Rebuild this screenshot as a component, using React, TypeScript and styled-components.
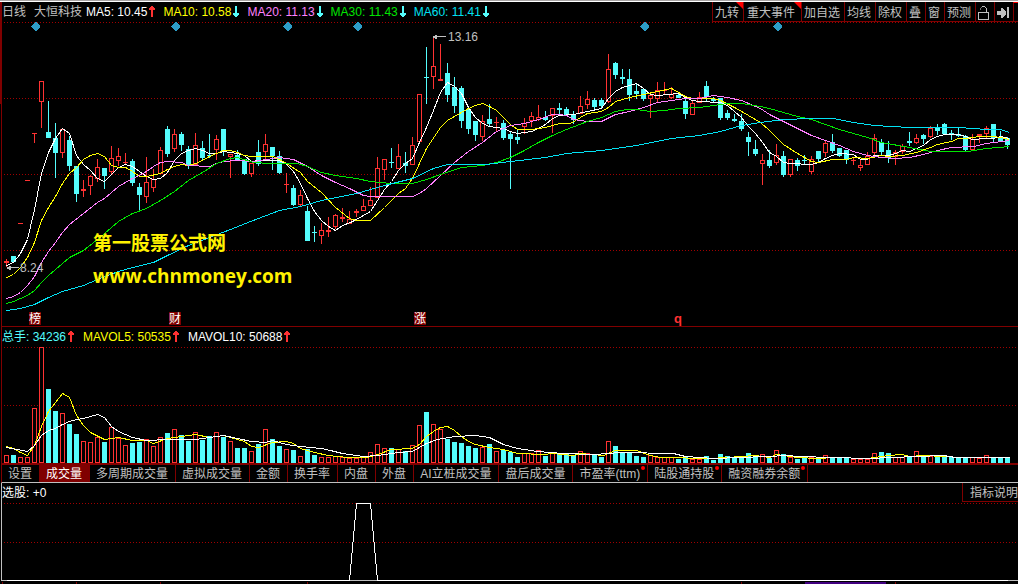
import React from "react";
import styled, { createGlobalStyle } from "styled-components";

const C = {
  up: "#ff3232",
  down: "#54fcfc",
  line: "#800000",
  grid: "#a00000",
  text: "#c0c0c0",
  ma5: "#ffffff",
  ma10: "#ffff00",
  ma20: "#ff80ff",
  ma30: "#00e600",
  ma60: "#02e2f4",
  diamond: "#2d9dc8",
};

const sans = '"Liberation Sans", "Noto Sans CJK SC", sans-serif';

const GlobalStyle = createGlobalStyle`
  * { box-sizing: border-box; }
  body { margin: 0; background: #000; color: ${C.text}; font: 12px/16px ${sans}; }
  button { font: inherit; color: inherit; background: none; border: 0; margin: 0; padding: 0; cursor: pointer; }
`;

/* ---------- data ---------- */

// direction, high, body top, body bottom, low
type Candle = ["u" | "d", number, number, number, number];

const candles: Candle[] = [
  ["u", 259, 261, 263, 267], ["d", 256, 256, 262, 262], ["u", 223, 223, 224, 224], ["u", 180, 180, 181, 181],
  ["u", 133, 133, 134, 143], ["u", 81, 81, 102, 128], ["d", 101, 132, 138, 138], ["d", 123, 138, 153, 178],
  ["u", 128, 129, 153, 158], ["d", 136, 140, 166, 171], ["d", 166, 166, 194, 202], ["u", 180, 189, 191, 197],
  ["u", 175, 176, 186, 195], ["u", 159, 167, 179, 182], ["d", 168, 168, 176, 189], ["u", 146, 158, 172, 175],
  ["u", 148, 156, 161, 166], ["u", 153, 162, 163, 164], ["d", 159, 161, 183, 186], ["d", 183, 187, 195, 212],
  ["u", 157, 182, 197, 203], ["u", 169, 179, 188, 192], ["u", 147, 150, 174, 174], ["d", 126, 129, 154, 157],
  ["u", 129, 134, 149, 152], ["d", 132, 134, 145, 151], ["d", 146, 149, 166, 169], ["u", 133, 145, 165, 165],
  ["d", 141, 148, 158, 160], ["d", 134, 155, 156, 158], ["u", 135, 139, 150, 160], ["d", 129, 129, 151, 156],
  ["u", 154, 154, 157, 178], ["d", 150, 155, 160, 161], ["d", 159, 159, 174, 175], ["u", 163, 163, 174, 177],
  ["d", 140, 152, 164, 166], ["u", 134, 144, 152, 160], ["d", 147, 147, 156, 170], ["d", 151, 156, 173, 174],
  ["u", 173, 184, 185, 193], ["d", 185, 188, 205, 206], ["u", 190, 195, 205, 207], ["d", 206, 211, 241, 241],
  ["d", 226, 232, 233, 242], ["u", 223, 230, 236, 244], ["u", 217, 230, 232, 237], ["u", 214, 215, 227, 229],
  ["u", 208, 217, 219, 222], ["u", 211, 219, 224, 224], ["u", 209, 211, 213, 217], ["u", 199, 206, 211, 211],
  ["u", 187, 200, 206, 206], ["u", 157, 168, 198, 198], ["u", 159, 159, 170, 180], ["d", 148, 162, 163, 168],
  ["u", 144, 156, 169, 169], ["d", 152, 163, 166, 173], ["u", 137, 145, 165, 165], ["u", 94, 94, 142, 143],
  ["d", 47, 77, 78, 104], ["u", 37, 66, 77, 89], ["u", 44, 79, 81, 81], ["d", 63, 73, 95, 102],
  ["d", 77, 87, 106, 113], ["d", 86, 88, 121, 128], ["d", 109, 110, 129, 134], ["d", 121, 121, 135, 141],
  ["u", 115, 121, 137, 141], ["d", 104, 119, 124, 126], ["u", 117, 122, 123, 132], ["d", 120, 123, 138, 140],
  ["d", 131, 134, 139, 189], ["d", 130, 137, 140, 144], ["u", 118, 123, 127, 134], ["u", 112, 116, 121, 127],
  ["u", 105, 117, 120, 121], ["d", 111, 117, 120, 121], ["u", 108, 108, 116, 133], ["d", 103, 108, 110, 114],
  ["d", 107, 109, 115, 116], ["d", 111, 114, 120, 124], ["u", 96, 106, 114, 114], ["u", 91, 99, 105, 109],
  ["d", 98, 100, 107, 109], ["d", 98, 100, 106, 108], ["u", 54, 69, 102, 103], ["d", 62, 63, 75, 79],
  ["d", 69, 77, 79, 84], ["d", 69, 79, 95, 101], ["d", 83, 91, 94, 99], ["d", 89, 89, 99, 101],
  ["u", 94, 95, 99, 118], ["u", 82, 90, 99, 102], ["u", 82, 90, 91, 94], ["u", 87, 94, 98, 99],
  ["d", 92, 95, 98, 98], ["d", 98, 101, 114, 119], ["u", 101, 103, 115, 115], ["u", 92, 97, 103, 103],
  ["d", 81, 86, 97, 101], ["d", 97, 99, 101, 102], ["d", 98, 98, 118, 120], ["d", 110, 113, 118, 120],
  ["d", 114, 119, 121, 122], ["d", 114, 121, 129, 131], ["d", 132, 137, 142, 156], ["d", 140, 149, 154, 156],
  ["u", 154, 160, 164, 185], ["d", 150, 160, 166, 168], ["u", 144, 155, 163, 165], ["d", 151, 156, 175, 177],
  ["u", 159, 159, 175, 177], ["d", 158, 160, 166, 171], ["d", 155, 160, 161, 165], ["u", 156, 159, 172, 174],
  ["d", 151, 151, 159, 163], ["u", 141, 143, 153, 157], ["d", 134, 142, 151, 153], ["d", 148, 148, 156, 157],
  ["d", 150, 150, 160, 164], ["u", 158, 160, 161, 165], ["u", 160, 165, 168, 171], ["u", 152, 156, 165, 165],
  ["u", 134, 138, 153, 156], ["d", 139, 142, 152, 156], ["d", 141, 150, 158, 163], ["u", 150, 152, 157, 165],
  ["u", 144, 146, 152, 154], ["d", 132, 141, 143, 146], ["u", 134, 138, 143, 144], ["d", 134, 135, 139, 144],
  ["u", 126, 128, 137, 138], ["d", 124, 128, 131, 135], ["d", 123, 124, 134, 134], ["d", 130, 133, 135, 140],
  ["d", 128, 134, 136, 137], ["d", 135, 136, 150, 151], ["u", 134, 139, 150, 150], ["u", 134, 134, 136, 143],
  ["u", 126, 128, 134, 139], ["d", 124, 124, 138, 142], ["d", 131, 137, 141, 142], ["d", 137, 138, 145, 149],
];

const volumeTops = [
  455, 455, 457, 457, 408, 347, 389, 411, 413, 424, 434, 441, 442, 437, 442, 427, 438, 445, 443, 442, 439, 446, 437,
  433, 429, 435, 441, 432, 440, 436, 432, 437, 441, 448, 448, 451, 444, 429, 439, 446, 449, 450, 456, 449, 455, 457,
  457, 456, 457, 458, 458, 457, 452, 444, 448, 448, 449, 451, 445, 425, 412, 424, 429, 439, 442, 443, 446, 448, 447,
  444, 451, 450, 452, 457, 453, 453, 450, 456, 453, 454, 454, 455, 451, 453, 455, 457, 441, 446, 452, 452, 456, 457,
  455, 457, 457, 457, 459, 456, 459, 459, 456, 460, 454, 456, 458, 457, 453, 456, 454, 458, 450, 454, 457, 459, 458,
  457, 459, 455, 457, 457, 458, 459, 459, 459, 453, 452, 453, 457, 457, 457, 451, 457, 456, 457, 457, 457, 457, 458,
  457, 458, 455, 458, 458, 458,
];

const ma5 =
  "6,265 13,262 20,253 27,239 34,209 41,173 48,152 55,138 62,128 69,133 76,155 83,164 90,170 97,178 104,181 111,174 118,167 125,164 132,166 139,171 146,176 153,179 160,178 167,172 174,160 181,153 188,150 195,148 202,150 209,153 216,153 223,151 230,152 237,153 244,155 251,161 258,160 272,160 279,160 286,164 293,171 300,183 307,198 314,211 321,220 328,226 335,230 342,225 350,222 356,219 370,211 377,200 384,189 391,181 398,170 405,163 412,158 419,142 426,127 433,110 440,92 447,82 454,86 461,93 468,107 475,117 482,123 489,126 496,127 503,128 510,131 517,133 531,131 538,128 545,124 552,118 559,115 573,114 587,111 601,108 608,98 615,91 622,87 636,83 643,88 650,94 657,95 678,93 685,97 692,100 699,101 720,102 727,105 734,111 741,117 748,126 755,133 762,142 769,152 776,156 783,162 790,163 811,164 818,162 825,158 832,155 839,153 853,154 860,159 867,159 874,155 888,155 895,153 902,150 909,151 916,148 923,145 930,139 937,136 944,134 958,134 965,136 972,139 986,138 993,138 1000,136 1009,138";
const ma10 =
  "6,277 13,274 20,267 27,257 34,242 41,220 48,207 55,196 62,183 69,173 76,167 83,159 90,155 97,153 104,156 111,165 118,167 125,167 132,171 139,176 146,176 160,173 167,169 174,166 181,164 188,165 195,163 202,160 209,156 216,153 223,150 230,150 237,152 244,155 251,156 272,156 279,159 286,163 300,172 307,181 321,192 335,207 349,218 356,220 370,220 384,207 398,193 405,188 412,178 419,163 426,148 440,127 447,120 454,116 461,112 468,108 475,105 482,103 489,106 496,110 503,117 510,124 517,129 531,129 545,127 559,123 570,123 580,117 587,113 601,111 608,107 615,101 629,97 643,94 657,91 671,88 678,92 685,96 692,98 713,98 720,100 734,107 748,115 760,122 769,130 783,144 797,153 811,161 818,162 832,159 846,159 853,157 867,158 881,155 888,156 902,155 916,152 930,147 937,144 951,141 958,138 965,138 979,136 993,136 1000,137 1009,139";
const ma20 =
  "6,298 13,296 20,292 27,285 34,276 41,262 48,251 55,242 62,232 69,224 83,213 97,202 104,198 111,192 118,186 125,182 132,178 139,175 146,171 153,166 160,162 167,161 181,162 188,165 209,166 216,163 223,161 237,160 253,161 279,157 293,159 307,166 321,175 335,182 349,188 363,195 370,196 412,196 419,193 426,188 440,175 454,162 468,151 482,142 496,131 510,125 524,123 538,119 552,114 559,114 566,115 573,119 587,121 601,121 615,114 629,111 643,107 657,102 671,100 685,98 699,98 713,95 727,97 741,100 760,108 769,114 783,121 797,128 811,135 825,140 839,145 853,151 867,155 881,157 895,158 909,157 923,154 937,150 951,147 973,146 986,143 1009,140";
const ma30 =
  "6,303 13,301 20,298 27,295 34,290 41,282 48,275 55,269 62,263 69,257 83,250 97,239 104,233 111,227 118,221 132,213 146,208 160,200 174,191 188,180 202,172 216,163 230,158 237,157 253,162 270,163 297,163 307,166 321,172 335,175 356,178 370,181 391,183 412,183 426,179 440,174 461,167 482,165 496,162 510,157 524,150 538,142 552,135 566,129 587,121 601,117 615,111 627,109 636,109 650,111 664,110 678,108 699,107 727,103 741,103 760,106 769,108 797,116 811,119 839,129 867,137 881,142 909,147 930,151 967,151 986,148 1009,146";
const ma60 =
  "6,310 20,308 34,304 48,297 62,291 83,285 97,279 118,271 132,267 153,262 167,255 188,245 209,237 230,229 250,221 279,210 300,206 321,200 356,193 384,185 412,178 433,168 447,164 485,164 510,161 545,157 566,153 601,150 636,145 671,138 699,135 720,131 741,125 760,122 783,119 811,118 833,118 853,122 874,125 909,127 958,127 986,129 1000,129 1009,132";
const mavol5 =
  "6,446 13,448 20,452 27,455 34,445 41,426 48,411 62,393 69,397 76,415 83,425 90,432 104,439 118,437 132,440 146,440 153,443 167,438 181,436 195,434 209,437 223,435 244,441 251,446 258,447 272,442 286,441 293,443 300,448 314,452 328,455 347,457 367,457 377,454 391,449 412,448 419,444 426,436 433,431 440,427 447,426 454,430 461,436 468,441 475,444 489,447 503,449 517,453 543,454 552,453 573,455 580,453 603,455 615,450 636,450 650,455 660,457 710,458 741,456 755,455 769,457 776,454 797,457 818,458 833,457 867,458 888,455 902,454 909,456 923,455 943,456 960,457 1009,457";
const mavol10 =
  "6,447 27,451 34,445 41,435 48,430 55,428 62,424 69,421 76,419 83,418 90,416 97,414 104,417 111,426 118,431 132,437 146,440 167,439 195,439 209,437 223,435 237,438 251,441 265,442 272,440 286,444 300,446 321,448 330,450 342,453 363,456 377,455 398,452 412,451 426,443 437,439 454,436 475,435 489,437 503,444 517,448 537,451 563,453 594,454 620,452 673,453 685,456 713,458 741,457 788,455 797,456 833,457 867,458 916,456 943,455 955,457 1009,457";

const diamonds = [35, 175, 287, 357, 644, 777];
const eventTags = [
  { x: 29, label: "榜" },
  { x: 169, label: "财" },
  { x: 414, label: "涨" },
];

const indicatorTabs: { label: string; dot?: boolean; active?: boolean }[] = [
  { label: "设置" },
  { label: "成交量", active: true },
  { label: "多周期成交量" },
  { label: "虚拟成交量" },
  { label: "金额" },
  { label: "换手率" },
  { label: "内盘" },
  { label: "外盘" },
  { label: "AI立桩成交量" },
  { label: "盘后成交量" },
  { label: "市盈率(ttm)", dot: true },
  { label: "陆股通持股", dot: true },
  { label: "融资融券余额", dot: true },
];

/* ---------- styled parts ---------- */

const Window = styled.main`
  width: 100%;
  overflow: hidden;
  border-top: 1px solid #a8a4a4;
`;

const TopEdge = styled.div`
  height: 1px;
  background: #ffffff;
`;

const Panel = styled.section`
  position: relative;
`;

const Header = styled.header<{ $edge: string; $thick?: boolean; $gap?: number }>`
  display: flex;
  align-items: stretch;
  height: 20px;
  gap: ${(p) => p.$gap ?? 7}px;
  line-height: 20px;
  white-space: nowrap;
  margin-left: ${(p) => (p.$thick ? 0 : 1)}px;
  border-left: ${(p) => (p.$thick ? 2 : 1)}px solid ${(p) => p.$edge};
`;

const Title = styled.h1`
  display: flex;
  gap: 8px;
  margin: 0 -3px 0 0;
  font-size: 12px;
  font-weight: 400;
`;

const Reading = styled.span<{ $color: string }>`
  display: flex;
  align-items: center;
  gap: 2px;
  color: ${(p) => p.$color};
`;

const Toolbar = styled.nav`
  display: flex;
  margin-left: auto;
  border-bottom: 1px solid ${C.line};
`;

const ToolButton = styled.button<{ $roomy?: boolean }>`
  position: relative;
  display: flex;
  align-items: center;
  justify-content: center;
  padding: ${(p) => (p.$roomy ? "2px 6px 0 3px" : "2px 4px 0 2px")};
  border-left: 1px solid ${C.line};
  line-height: 16px;
`;

const MoreButton = styled.button`
  width: 5px;
  border-left: 1px solid ${C.line};
  border-top: 1px solid #ff0000;
`;

const Flag = styled.i`
  position: absolute;
  top: 0;
  right: 0;
  border-top: 7px solid #ff0000;
  border-left: 7px solid transparent;
`;

const Chart = styled.svg<{ $h: number }>`
  display: block;
  width: 100%;
  height: ${(p) => p.$h}px;
  font-family: ${sans};
  font-size: 12px;
`;

const Watermark = styled.div`
  position: absolute;
  left: 93px;
  top: 225px;
  color: #fff200;
  font: 700 19px/33px "Open Sans", "Noto Sans CJK SC", sans-serif;
`;

const Tabs = styled.nav`
  display: flex;
  height: 20px;
  margin-left: 1px;
  border-left: 1px solid ${C.line};
  border-top: 2px solid ${C.line};
  border-bottom: 1px solid ${C.text};
  white-space: nowrap;
`;

const Tab = styled.button<{ $active?: boolean }>`
  position: relative;
  padding: 2px 7px 0 6px;
  border-right: 1px solid ${C.line};
  line-height: 15px;
  color: ${(p) => (p.$active ? "#ffffff" : C.text)};
  background: ${(p) => (p.$active ? C.line : "transparent")};
`;

const Dot = styled.i`
  position: absolute;
  top: 1px;
  right: 2px;
  width: 4px;
  height: 4px;
  border-radius: 2px;
  background: #ff0000;
`;

const NoteButton = styled.button`
  margin-left: auto;
  height: 19px;
  padding: 2px 0 0 7px;
  border-left: 1px solid ${C.line};
  border-bottom: 1px solid ${C.line};
  line-height: 16px;
`;

/* ---------- drawings ---------- */

const Arrow = ({ dir }: { dir: "up" | "down" }) => (
  <svg width="7" height="12" viewBox="0 0 7 12" shapeRendering="crispEdges" aria-hidden="true">
    {dir === "up" ? (
      <path d="M2 0h2v1h1v1h1v2h-2v7h-2v-7h-2v-2h1v-1h1z" fill={C.up} />
    ) : (
      <path d="M2 11h2v-1h1v-1h1v-2h-2v-7h-2v7h-2v2h1v1h1z" fill={C.down} />
    )}
  </svg>
);

const LockIcon = () => (
  <svg width="12" height="14" viewBox="0 0 12 14" shapeRendering="crispEdges" aria-hidden="true">
    <path d="M.5 6.5h10v7h-10z" fill="none" stroke={C.text} />
    <path d="M2 2h1v2h-1z M3 1h1v1h-1z" fill="#707070" />
    <path d="M4 0h3v1h-3z M7 1h1v1h-1z M8 2h1v4h-1z" fill={C.text} />
  </svg>
);

const JumpIcon = () => (
  <svg width="12" height="12" viewBox="0 0 12 12" shapeRendering="crispEdges" aria-hidden="true">
    <path d="M0 4h4V1h1l4 4v2l-4 4H4V8H0z M10 0h2v11h-2z" fill={C.text} />
  </svg>
);

const GridLine = ({ y }: { y: number }) => (
  <line x1="4" x2="100%" y1={y + 0.5} y2={y + 0.5} stroke={C.grid} strokeDasharray="1 2" />
);

const Curve = ({ points, color }: { points: string; color: string }) => (
  <polyline points={points} transform="translate(.5 .5)" fill="none" stroke={color} />
);

const Bar = ({ x, top, bottom, up }: { x: number; top: number; bottom: number; up: boolean }) =>
  up && bottom - top > 2 ? (
    <rect x={x + 0.5} y={top + 0.5} width="4" height={bottom - top - 1} fill="#000" stroke={C.up} />
  ) : (
    <rect x={x} y={top} width="5" height={bottom - top} fill={up ? C.up : C.down} />
  );

const PriceChart = () => (
  <Chart $h={305} role="img" aria-label="日线">
    <g transform="translate(0 -22)" shapeRendering="crispEdges">
      <rect x="0" y="22" width="2" height="82" fill={C.line} />
      <rect x="1" y="104" width="1" height="223" fill={C.line} />
      {[22, 98, 174, 250].map((y) => (
        <GridLine key={y} y={y} />
      ))}
      <line x1="1" x2="100%" y1="326.5" y2="326.5" stroke={C.line} />
      {diamonds.map((x) => (
        <path key={x} d={`M${x} 22h1l4 4v1l-4 4h-1l-4-4v-1z`} fill={C.diamond} />
      ))}
      {candles.map(([dir, high, top, bottom, low], i) => (
        <g key={i}>
          <rect x={6 + i * 7} y={high} width="1" height={low - high} fill={dir === "u" ? C.up : C.down} />
          <Bar x={4 + i * 7} top={top} bottom={bottom} up={dir === "u"} />
        </g>
      ))}
      <Curve points={ma5} color={C.ma5} />
      <Curve points={ma10} color={C.ma10} />
      <Curve points={ma20} color={C.ma20} />
      <Curve points={ma30} color={C.ma30} />
      <Curve points={ma60} color={C.ma60} />
      <path d="M433 36h2v-1h2v1h9v1h-9v2h-2v-1h-2z" fill={C.text} />
      <text x="448" y="41" fill={C.text}>13.16</text>
      <path d="M7 267h2v-1h2v1h8v1h-8v2h-2v-1h-2z" fill={C.text} />
      <text x="20" y="272" fill={C.text}>8.24</text>
      {eventTags.map((t) => (
        <g key={t.x}>
          <rect x={t.x} y="312" width="12" height="13" fill={C.line} />
          <text x={t.x} y="323" fill="#fff">{t.label}</text>
        </g>
      ))}
      <text x="674" y="323" fill={C.up} fontWeight="700" fontSize="13">q</text>
    </g>
  </Chart>
);

const VolumeChart = () => (
  <Chart $h={116} role="img" aria-label="成交量">
    <g transform="translate(0 -347)" shapeRendering="crispEdges">
      <rect x="1" y="347" width="1" height="116" fill={C.line} />
      <GridLine y={347} />
      <GridLine y={405} />
      {volumeTops.map((top, i) => (
        <Bar key={i} x={4 + i * 7} top={top} bottom={463} up={candles[i][0] === "u"} />
      ))}
      <Curve points={mavol5} color={C.ma10} />
      <Curve points={mavol10} color={C.ma5} />
    </g>
  </Chart>
);

const SignalChart = () => (
  <Chart $h={81} role="img" aria-label="选股">
    <g transform="translate(0 -503)" shapeRendering="crispEdges">
      <rect x="1" y="503" width="1" height="78" fill={C.text} />
      <GridLine y={503} />
      <GridLine y={542} />
      <line x1="1" x2="100%" y1="580.5" y2="580.5" stroke={C.text} />
      <Curve points="6,580 349,580 356,503 370,503 377,580 1007,580" color="#ffffff" />
      {[2, 76, 160, 307, 741, 895].map((x) => (
        <rect key={x} x={x} y="582" width="1" height="2" fill={C.line} />
      ))}
      <rect x="805" y="582" width="81" height="2" fill="#40007f" />
    </g>
  </Chart>
);

/* ---------- page ---------- */

const App = () => (
  <>
    <GlobalStyle />
    <Window>
      <TopEdge />
      <Panel>
        <Header $edge={C.line} $thick>
          <Title>
            <span>日线</span>
            <span>大恒科技</span>
          </Title>
          <Reading $color={C.ma5}>MA5: 10.45<Arrow dir="up" /></Reading>
          <Reading $color={C.ma10}>MA10: 10.58<Arrow dir="down" /></Reading>
          <Reading $color={C.ma20}>MA20: 11.13<Arrow dir="down" /></Reading>
          <Reading $color={C.ma30}>MA30: 11.43<Arrow dir="down" /></Reading>
          <Reading $color={C.ma60}>MA60: 11.41<Arrow dir="down" /></Reading>
          <Toolbar>
            <ToolButton>九转<Flag /></ToolButton>
            <ToolButton $roomy>重大事件<Flag /></ToolButton>
            <ToolButton>加自选</ToolButton>
            <ToolButton>均线</ToolButton>
            <ToolButton>除权</ToolButton>
            <ToolButton>叠</ToolButton>
            <ToolButton>窗</ToolButton>
            <ToolButton>预测</ToolButton>
            <ToolButton aria-label="锁定"><LockIcon /></ToolButton>
            <ToolButton aria-label="跳转"><JumpIcon /></ToolButton>
            <MoreButton aria-label="更多" />
          </Toolbar>
        </Header>
        <PriceChart />
        <Watermark>
          <div>第一股票公式网</div>
          <div>www.chnmoney.com</div>
        </Watermark>
      </Panel>

      <Panel>
        <Header $edge={C.line} $gap={8}>
          <Reading $color={C.down}>总手: 34236<Arrow dir="up" /></Reading>
          <Reading $color={C.ma10}>MAVOL5: 50535<Arrow dir="up" /></Reading>
          <Reading $color={C.ma5}>MAVOL10: 50688<Arrow dir="up" /></Reading>
        </Header>
        <VolumeChart />
        <Tabs>
          {indicatorTabs.map((t) => (
            <Tab key={t.label} $active={t.active}>
              {t.label}
              {t.dot && <Dot />}
            </Tab>
          ))}
        </Tabs>
      </Panel>

      <Panel>
        <Header $edge={C.text}>
          <Reading $color={C.ma5}>选股: +0</Reading>
          <NoteButton>指标说明</NoteButton>
        </Header>
        <SignalChart />
      </Panel>
    </Window>
  </>
);

export default App;
